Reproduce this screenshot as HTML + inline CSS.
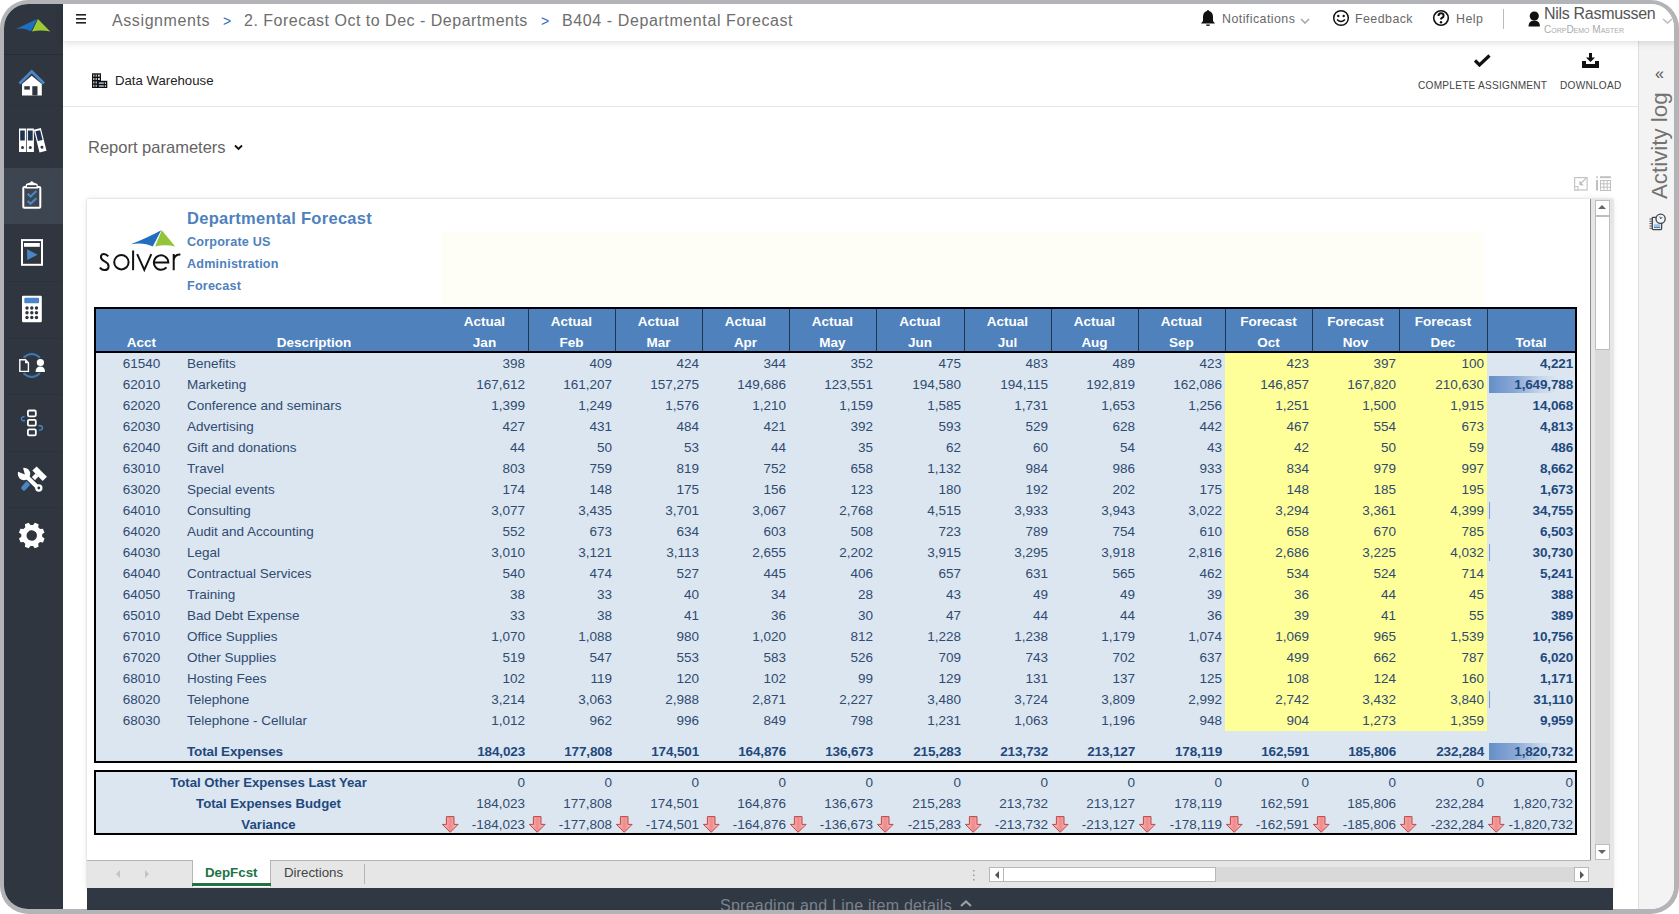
<!DOCTYPE html>
<html><head><meta charset="utf-8">
<style>
*{box-sizing:border-box;margin:0;padding:0}
html,body{width:1679px;height:914px;overflow:hidden;background:#fff;font-family:"Liberation Sans",sans-serif}
.abs{position:absolute}
.t{position:absolute;white-space:nowrap;line-height:1}
#frame{position:absolute;left:0;top:0;width:1679px;height:914px;border:4px solid #b3b4b8;border-right-width:5px;border-bottom-width:5px;border-radius:28px;overflow:hidden;background:#fff}
.hc{position:absolute;top:310px;height:42px;color:#fff;font-weight:bold;font-size:13.5px;line-height:21px;text-align:center;padding-top:1px}
.vl{position:absolute;top:309px;width:1px;height:42px;background:#1f3550}
.acct{position:absolute;left:96px;width:91px;text-align:center;font-size:13.5px;line-height:21px;color:#2f4b70}
.desc{position:absolute;left:187px;font-size:13.5px;line-height:21px;color:#2f4b70;white-space:nowrap}
.num{position:absolute;text-align:right;font-size:13.5px;line-height:21px;color:#2f4b70;white-space:nowrap}
.tot,.b{font-weight:bold;color:#1f497d;letter-spacing:-0.15px}
.lab2{position:absolute;left:96px;width:345px;text-align:center;font-size:13.2px;line-height:21px;font-weight:bold;color:#1f497d;white-space:nowrap}
.bar{position:absolute;height:17px;background:linear-gradient(to right,#6690c8 0%,#88a7d5 30%,#c5d5ea 60%,#dce6f1 80%)}
.arr{position:absolute}
</style></head><body>
<div id="frame">
  <!-- sidebar -->
  <div class="abs" style="left:0;top:0;width:59px;height:906px;background:#2f363f"></div>
  <div class="abs" style="left:0;top:164px;width:59px;height:56px;background:#3d4550"></div>
  <!-- top bar -->
  <div class="abs" style="left:59px;top:0;width:1616px;height:37px;background:#fff;box-shadow:0 2px 7px rgba(0,0,0,.13);z-index:2"></div>
  <!-- sub header -->
  <div class="abs" style="left:59px;top:102px;width:1575px;height:1px;background:#e6e6e6"></div>
  <!-- right panel -->
  <div class="abs" style="left:1634px;top:37px;width:37px;height:873px;background:#f3f3f3;border-left:1px solid #dedede"></div>
</div>

<!-- sidebar icons -->
<svg class="abs" style="left:0;top:0" width="63" height="914" viewBox="0 0 63 914">
  <!-- separators -->
  <g fill="#272d35">
    <rect x="4" y="54" width="59" height="1"/>
    <rect x="4" y="105" width="59" height="1" opacity="0.35"/>
    <rect x="4" y="281" width="59" height="1" opacity="0.4"/>
    <rect x="4" y="338" width="59" height="1" opacity="0.4"/>
    <rect x="4" y="394" width="59" height="1" opacity="0.4"/>
    <rect x="4" y="451" width="59" height="1" opacity="0.4"/>
    <rect x="4" y="507" width="59" height="1" opacity="0.4"/>
  </g>
  <!-- logo -->
  <path d="M15.9 29 Q30 22 37.4 18.9 L31 31.3 Q24 27.5 15.9 29 Z" fill="#1f6ec0"/>
  <path d="M38 18.9 L50.2 31.6 Q41 29.5 32 31.5 Z" fill="#9acb34"/>
  <!-- home -->
  <path d="M19.5 83.5 L31.7 71.5 L44 83.5" fill="none" stroke="#4a86c6" stroke-width="2.8" stroke-linejoin="miter"/>
  <path d="M22 84 L31.7 75.8 L41.8 84 V95.4 H22 Z" fill="#fff"/>
  <rect x="24.3" y="86.2" width="5.5" height="3.4" fill="#2f363f"/>
  <rect x="32.3" y="86.2" width="5.2" height="9.2" fill="#2f363f"/>
  <!-- binders -->
  <rect x="19" y="128.5" width="7" height="23.5" fill="#fff"/>
  <rect x="26.7" y="128.5" width="7.2" height="23.5" fill="#fff"/>
  <rect x="20.2" y="130.5" width="4.6" height="10" fill="#1e3352"/>
  <rect x="27.9" y="130.5" width="4.8" height="10" fill="#1e3352"/>
  <circle cx="22.5" cy="147.5" r="1.5" fill="#2f363f"/>
  <circle cx="30.3" cy="147.5" r="1.5" fill="#2f363f"/>
  <g transform="rotate(-14 40 140)">
    <rect x="36.5" y="128.5" width="7.2" height="23.5" fill="#fff"/>
    <rect x="37.7" y="130.5" width="4.8" height="10" fill="#1e3352"/>
    <circle cx="40.1" cy="147.5" r="1.5" fill="#2f363f"/>
  </g>
  <!-- clipboard -->
  <rect x="23.3" y="187" width="17" height="20.8" rx="1" fill="none" stroke="#fff" stroke-width="2"/>
  <path d="M25.2 188.5 L26 184 L30 182.5 L31.8 181 L33.6 182.5 L37.5 184 L38.3 188.5 Z" fill="#fff"/>
  <rect x="27" y="185.2" width="9.5" height="1.8" fill="#3d4550"/>
  <path d="M27.6 193.8 L30.6 196.6 L36.4 191" fill="none" stroke="#4a86c6" stroke-width="2.2"/>
  <path d="M27.6 201 L30.6 203.8 L36.4 198.2" fill="none" stroke="#4a86c6" stroke-width="2.2"/>
  <!-- play -->
  <rect x="22" y="240.1" width="20" height="24.7" fill="none" stroke="#fff" stroke-width="2"/>
  <rect x="24" y="243" width="15.8" height="3.8" fill="#fff"/>
  <path d="M27 249.3 L37.6 254.7 L27.3 260 Z" fill="#4a86c6"/>
  <!-- calculator -->
  <rect x="22" y="295.8" width="19.8" height="26.5" rx="1.2" fill="#fff"/>
  <rect x="24.3" y="297.8" width="14.8" height="5.4" rx="1" fill="#4a86c6"/>
  <g fill="#2f363f">
    <circle cx="27" cy="308" r="1.7"/><circle cx="31.8" cy="308" r="1.7"/><circle cx="36.5" cy="308" r="1.7"/>
    <circle cx="27" cy="312.8" r="1.7"/><circle cx="31.8" cy="312.8" r="1.7"/><circle cx="36.5" cy="312.8" r="1.7"/>
    <circle cx="27" cy="317.5" r="1.7"/><circle cx="31.8" cy="317.5" r="1.7"/><circle cx="36.5" cy="317.5" r="1.7"/>
  </g>
  <!-- doc + person -->
  <path d="M23.5 357.8 Q31.7 350.2 40 357.8" fill="none" stroke="#3f78b8" stroke-width="2"/>
  <path d="M23.5 373.2 Q31.7 380.8 40 373.2" fill="none" stroke="#3f78b8" stroke-width="2"/>
  <path d="M19.8 359.8 H25.5 L28.4 362.8 V371.4 H19.8 Z" fill="#2f363f" stroke="#fff" stroke-width="1.4"/>
  <path d="M25 360 V363.3 H28.3 Z" fill="#fff"/>
  <circle cx="40.4" cy="362.5" r="3.6" fill="#fff"/>
  <path d="M35.6 372 Q35.6 366.5 40.4 366.5 Q45 366.5 45 372 Z" fill="#fff"/>
  <!-- flow -->
  <g fill="none" stroke="#fff" stroke-width="1.8">
    <rect x="27.9" y="410.5" width="7.9" height="5.8" rx="1.2"/>
    <rect x="27.9" y="419.9" width="7.9" height="5.8" rx="1.2"/>
    <rect x="27.9" y="429.4" width="7.9" height="6" rx="1.2"/>
  </g>
  <path d="M24.5 416.5 Q21 417 21.5 419.5 Q22.5 421.5 25 420.5" fill="none" stroke="#4a86c6" stroke-width="1.4"/>
  <path d="M38.5 425.5 Q42.5 425.5 42.5 428 Q42 430.5 39 430" fill="none" stroke="#4a86c6" stroke-width="1.4"/>
  <!-- tools -->
  <path d="M30.5 480.5 L23.8 488" stroke="#4a86c6" stroke-width="5" stroke-linecap="round"/>
  <path d="M34.5 468.5 L44.8 478.8" stroke="#fff" stroke-width="6"/>
  <path d="M37 475 L31 481" stroke="#fff" stroke-width="4.4"/>
  <path d="M25.5 475.5 L38.5 488.2" stroke="#2f363f" stroke-width="6.6" stroke-linecap="round"/>
  <path d="M25.5 475.5 L38.5 488.2" stroke="#fff" stroke-width="4.2" stroke-linecap="round"/>
  <circle cx="38.8" cy="488" r="3.7" fill="#fff"/>
  <circle cx="38.8" cy="488" r="1.4" fill="#2f363f"/>
  <circle cx="24" cy="474" r="6.2" fill="#fff"/>
  <path d="M24.8 474.6 L17 471.2 L17 466 L22.5 465.5 Z" fill="#2f363f"/>
  <!-- gear -->
  <g transform="translate(31.7 535.6)">
    <path id="gear" fill="#fff" fill-rule="evenodd" d="M-2.2 -12.7 L2.2 -12.7 L3 -9.6 L5.6 -8.5 L8.3 -10.1 L11.4 -7 L9.8 -4.3 L10.9 -1.7 L14 -0.9 L14 3.5 L10.9 4.3 L9.8 6.9 L11.4 9.6 L8.3 12.7 L5.6 11.1 L3 12.2 L2.2 15.3 L-2.2 15.3 L-3 12.2 L-5.6 11.1 L-8.3 12.7 L-11.4 9.6 L-9.8 6.9 L-10.9 4.3 L-14 3.5 L-14 -0.9 L-10.9 -1.7 L-9.8 -4.3 L-11.4 -7 L-8.3 -10.1 L-5.6 -8.5 L-3 -9.6 Z M0 -4.3 A5.6 5.6 0 1 0 0.01 -4.3 Z" transform="rotate(22.5) translate(0 -1.3) scale(0.93)"/>
  </g>
</svg>

<!-- top bar content -->
<div style="position:absolute;left:0;top:0;z-index:3">
  <svg class="abs" style="left:76px;top:14px" width="11" height="10"><g fill="#222"><rect x="0" y="0" width="10" height="1.6"/><rect x="0" y="4" width="10" height="1.6"/><rect x="0" y="8" width="10" height="1.6"/></g></svg>
  <div class="t" style="left:112px;top:13px;font-size:16px;color:#6e6e6e;letter-spacing:0.6px">Assignments</div>
  <div class="t" style="left:223px;top:14px;font-size:14px;color:#2d6db5">&gt;</div>
  <div class="t" style="left:244px;top:13px;font-size:16px;color:#6e6e6e;letter-spacing:0.5px">2. Forecast Oct to Dec - Departments</div>
  <div class="t" style="left:541px;top:14px;font-size:14px;color:#2d6db5">&gt;</div>
  <div class="t" style="left:562px;top:13px;font-size:16px;color:#6e6e6e;letter-spacing:0.6px">B404 - Departmental Forecast</div>

  <svg class="abs" style="left:1200px;top:9px" width="16" height="18" viewBox="0 0 16 18"><path d="M8 1 Q9 1 9 2 Q13 3 13 8 V12 L15 14.5 H1 L3 12 V8 Q3 3 7 2 Q7 1 8 1 Z" fill="#111"/><path d="M6 15.5 H10 Q10 17 8 17 Q6 17 6 15.5Z" fill="#111"/></svg>
  <div class="t" style="left:1222px;top:13px;font-size:12.4px;color:#686868;letter-spacing:0.45px">Notifications</div>
  <svg class="abs" style="left:1300px;top:18px" width="10" height="7"><path d="M1 1 L5 5 L9 1" fill="none" stroke="#aaa" stroke-width="1.6"/></svg>
  <svg class="abs" style="left:1332px;top:9px" width="18" height="18" viewBox="0 0 18 18"><circle cx="9" cy="9" r="7.3" fill="none" stroke="#111" stroke-width="1.5"/><circle cx="6.3" cy="7" r="1.2" fill="#111"/><circle cx="11.7" cy="7" r="1.2" fill="#111"/><path d="M5 10.5 Q9 14.5 13 10.5" fill="none" stroke="#111" stroke-width="1.5"/></svg>
  <div class="t" style="left:1355px;top:13px;font-size:12.4px;color:#686868;letter-spacing:0.45px">Feedback</div>
  <svg class="abs" style="left:1432px;top:9px" width="18" height="18" viewBox="0 0 18 18"><circle cx="9" cy="9" r="7.3" fill="none" stroke="#111" stroke-width="1.6"/><path d="M6.5 7 Q6.5 4.3 9 4.3 Q11.6 4.3 11.6 6.7 Q11.6 8.2 9.8 9 Q9 9.4 9 10.6" fill="none" stroke="#111" stroke-width="2"/><circle cx="9" cy="13.2" r="1.2" fill="#111"/></svg>
  <div class="t" style="left:1456px;top:13px;font-size:12.4px;color:#686868;letter-spacing:0.45px">Help</div>
  <div class="abs" style="left:1503px;top:9px;width:1px;height:20px;background:#bbb"></div>
  <svg class="abs" style="left:1527px;top:10px" width="15" height="18" viewBox="0 0 15 18"><circle cx="7.3" cy="6" r="4.6" fill="#111"/><path d="M1.5 16.5 Q1.5 10.5 7.3 10.5 Q13 10.5 13 16.5 Z" fill="#111"/></svg>
  <div class="t" style="left:1544px;top:6px;font-size:16px;color:#555;letter-spacing:-0.3px">Nils Rasmussen</div>
  <div class="t" style="left:1544px;top:25px;font-size:10px;color:#aaa;font-variant:small-caps">CorpDemo Master</div>
  <svg class="abs" style="left:1662px;top:18px" width="11" height="7"><path d="M1 1 L5.5 5 L10 1" fill="none" stroke="#bbb" stroke-width="1.6"/></svg>
</div>

<!-- sub header content -->
<svg class="abs" style="left:92px;top:73px" width="16" height="16" viewBox="0 0 16 16">
  <rect x="0" y="0.3" width="9" height="14.7" fill="#111"/>
  <g fill="#d8d8d8"><rect x="1.2" y="1.6" width="1.2" height="2"/><rect x="3.6" y="1.6" width="1.2" height="2"/><rect x="6" y="1.6" width="1.8" height="2"/>
  <rect x="1.2" y="5" width="1.2" height="2"/><rect x="3.6" y="5" width="1.2" height="2"/><rect x="6" y="5" width="1.8" height="2"/>
  <rect x="1.2" y="8.4" width="1.2" height="2"/><rect x="3.6" y="8.4" width="1.2" height="2"/>
  <rect x="1.2" y="11.8" width="1.2" height="2"/><rect x="3.6" y="11.8" width="1.2" height="2"/></g>
  <rect x="5.5" y="7.8" width="9.8" height="7.2" fill="#111"/>
  <g fill="#9fb6d0"><rect x="6.8" y="9.3" width="5" height="1.6"/><rect x="6.8" y="12.2" width="5" height="1.6"/></g>
  <g fill="#ddd"><rect x="12.8" y="9.3" width="1.2" height="1.6"/><rect x="12.8" y="12.2" width="1.2" height="1.6"/></g>
</svg>
<div class="t" style="left:115px;top:74px;font-size:13.2px;color:#222">Data Warehouse</div>

<svg class="abs" style="left:1474px;top:54px" width="17" height="13" viewBox="0 0 17 13"><path d="M1 6.5 L5.5 11 L15.5 1.5" fill="none" stroke="#111" stroke-width="3.2"/></svg>
<div class="t" style="left:1418px;top:81px;font-size:10.1px;color:#444;letter-spacing:0.25px">COMPLETE ASSIGNMENT</div>
<svg class="abs" style="left:1582px;top:53px" width="17" height="16" viewBox="0 0 17 16"><path d="M7 0 H10 V4.5 H13 L8.5 9 L4 4.5 H7 Z" fill="#111"/><path d="M0 8 H4 V11 H13 V8 H17 V15 H0 Z" fill="#111"/></svg>
<div class="t" style="left:1560px;top:81px;font-size:10.1px;color:#444;letter-spacing:0.25px">DOWNLOAD</div>

<!-- right panel content -->
<div class="t" style="left:1655px;top:66px;font-size:16px;color:#555">&laquo;</div>
<div class="t" style="left:1649px;top:199px;font-size:22.3px;color:#737373;transform-origin:0 0;transform:rotate(-90deg);font-weight:normal">Activity log</div>
<svg class="abs" style="left:1644px;top:208px" width="28" height="28" viewBox="0 0 28 28">
  <rect x="8.3" y="9.3" width="9.3" height="12.3" rx="0.8" fill="#e6eef8" stroke="#444" stroke-width="1.3"/>
  <g stroke="#555" stroke-width="1"><path d="M5.5 11 H8 M5.5 13.3 H8 M5.5 15.6 H8 M5.5 18 H8 M5.5 20.3 H8"/></g>
  <rect x="10" y="16.3" width="6" height="3" fill="#9dc0e8"/>
  <rect x="10" y="19" width="6" height="0.9" fill="#4a6fa0"/>
  <circle cx="16.6" cy="10.7" r="4.6" fill="#eef6fc" stroke="#444" stroke-width="1.3"/>
  <path d="M15.8 8.5 L16.6 11 L18.3 9" fill="none" stroke="#556" stroke-width="1"/>
</svg>

<!-- report params -->
<div class="t" style="left:88px;top:139px;font-size:16.5px;color:#646464">Report parameters</div>
<svg class="abs" style="left:234px;top:144px" width="9" height="7"><path d="M1 1.5 L4.5 5 L8 1.5" fill="none" stroke="#111" stroke-width="1.8"/></svg>

<!-- sheet icons -->
<svg class="abs" style="left:1568px;top:170px" width="48" height="26" viewBox="0 0 48 26">
  <rect x="6.6" y="7.6" width="12.5" height="12.4" fill="none" stroke="#c4c4c4" stroke-width="1.2"/>
  <rect x="6.6" y="16.6" width="3.4" height="3.4" fill="#fff" stroke="#c4c4c4" stroke-width="1.1"/>
  <path d="M18.5 8.5 L13.5 13.5 L16 15.2 L11.5 15.2 L11.5 10.6 L13.2 12.3 L17.5 8 Z" fill="#b8b8b8"/>
  <rect x="28" y="10" width="2" height="10.6" fill="#c0c0c0"/>
  <rect x="32" y="6.2" width="10.8" height="2" fill="#c0c0c0"/>
  <rect x="28" y="6.2" width="2" height="2" fill="#d0d0d0"/>
  <g fill="none" stroke="#c0c0c0" stroke-width="1"><rect x="32.5" y="10.5" width="10" height="10"/><path d="M32.5 13.8 H42.5 M32.5 17.2 H42.5 M35.8 10.5 V20.5 M39.2 10.5 V20.5"/></g>
</svg>

<!-- spreadsheet container -->
<div class="abs" style="left:87px;top:199px;width:1526px;height:690px;background:#fff;box-shadow:0 0 2px rgba(0,0,0,.2),0 0 7px rgba(0,0,0,.08)"></div>
<div class="abs" style="left:1590px;top:199px;width:23px;height:662px;background:#e6e6e6;border-left:1px solid #8c8c8c"></div>
<div class="abs" style="left:1595px;top:200px;width:15px;height:16px;background:#fff;border:1px solid #bdbdbd"></div>
<svg class="abs" style="left:1597px;top:204px" width="10" height="6"><path d="M1 5 L5 1 L9 5Z" fill="#666"/></svg>
<div class="abs" style="left:1595px;top:216px;width:15px;height:134px;background:#fff;border:1px solid #bdbdbd"></div>
<div class="abs" style="left:1595px;top:350px;width:15px;height:494px;background:#dadada"></div>
<div class="abs" style="left:1595px;top:844px;width:15px;height:16px;background:#fff;border:1px solid #bdbdbd"></div>
<svg class="abs" style="left:1597px;top:849px" width="10" height="6"><path d="M1 1 L5 5 L9 1Z" fill="#666"/></svg>
<div class="abs" style="left:87px;top:860px;width:1504px;height:1px;background:#b5b5b5"></div>
<!-- tab bar -->
<div class="abs" style="left:87px;top:861px;width:1526px;height:27px;background:#e6e6e6"></div>
<svg class="abs" style="left:112px;top:868px" width="40" height="12"><path d="M8 2 L4 6 L8 10Z" fill="#c4c4c4"/><path d="M33 2 L37 6 L33 10Z" fill="#c4c4c4"/></svg>
<div class="abs" style="left:192px;top:860px;width:79px;height:27px;background:#fff;border-left:1px solid #b5b5b5;border-right:1px solid #b5b5b5"></div>
<div class="abs" style="left:192px;top:883px;width:79px;height:3px;background:#217346"></div>
<div class="t" style="left:205px;top:866px;font-size:13.3px;color:#217346;font-weight:bold">DepFcst</div>
<div class="t" style="left:284px;top:866px;font-size:13.3px;color:#444">Directions</div>
<div class="abs" style="left:364px;top:864px;width:1px;height:20px;background:#b5b5b5"></div>
<svg class="abs" style="left:972px;top:869px" width="4" height="13"><g fill="#999"><rect x="1" y="1" width="1.5" height="1.5"/><rect x="1" y="5.5" width="1.5" height="1.5"/><rect x="1" y="10" width="1.5" height="1.5"/></g></svg>
<div class="abs" style="left:1004px;top:867px;width:570px;height:15px;background:#d9d9d9"></div>
<div class="abs" style="left:989px;top:867px;width:15px;height:15px;background:#fff;border:1px solid #b8b8b8"></div>
<svg class="abs" style="left:993px;top:870px" width="8" height="10"><path d="M6 1 L2 5 L6 9Z" fill="#555"/></svg>
<div class="abs" style="left:1003px;top:867px;width:213px;height:15px;background:#fff;border:1px solid #b8b8b8"></div>
<div class="abs" style="left:1574px;top:867px;width:15px;height:15px;background:#fff;border:1px solid #b8b8b8"></div>
<svg class="abs" style="left:1578px;top:870px" width="8" height="10"><path d="M2 1 L6 5 L2 9Z" fill="#555"/></svg>
<!-- bottom dark bar -->
<div class="abs" style="left:87px;top:888px;width:1526px;height:22px;background:#2f3843;overflow:hidden">
  <div class="t" style="left:633px;top:10px;font-size:16px;color:#7b828b;letter-spacing:0.25px">Spreading and Line item details</div>
  <svg class="abs" style="left:872px;top:11px" width="14" height="9"><path d="M2 7 L7 2.5 L12 7" fill="none" stroke="#9aa0a7" stroke-width="2.2"/></svg>
</div>
<!-- shadow right of container -->

<!-- report header -->
<div class="abs" style="left:441px;top:232px;width:1043px;height:73px;background:#fefef7"></div>
<svg class="abs" style="left:98px;top:226px" width="85" height="50" viewBox="98 226 85 50">
  <path d="M130.8 244.3 Q150 236.5 161.2 230.2 L152.7 246.6 Q143.5 241.8 130.8 244.3 Z" fill="#1f6ec0"/>
  <path d="M161.8 230.2 L175.2 246.6 Q165 243.8 155.1 246.6 Z" fill="#93c43a"/>
</svg>
<svg class="abs" style="left:96px;top:244px" width="90" height="32" viewBox="96 244 90 32"><g fill="none" stroke="#111" stroke-width="2">
<path d="M108.2 256.3 Q106.2 254 103.6 254.1 Q100.9 254.3 100.9 257.2 Q101.1 259.8 104.6 261.4 Q108.7 263.4 108.6 266.4 Q108.4 270.1 104.4 270.1 Q101.4 270.1 100 267.6"/>
<circle cx="121.4" cy="262.2" r="7.2"/>
<path d="M133.1 250.5 V270.2"/>
<path d="M137.2 254.2 L144.3 269.8 L151.3 254.2"/>
<path d="M153.9 262.4 H168.3 A7.2 7.2 0 1 0 166.5 267.3"/>
<path d="M173.7 254 V270.2 M173.7 260 Q174.6 254.4 180.4 254.6"/>
</g></svg>
<div class="t" style="left:187px;top:210px;font-size:16.5px;color:#4f81bd;font-weight:bold;letter-spacing:0.3px">Departmental Forecast</div>
<div class="t" style="left:187px;top:236px;font-size:12.6px;color:#4f81bd;font-weight:bold;letter-spacing:0.2px">Corporate US</div>
<div class="t" style="left:187px;top:258px;font-size:12.6px;color:#4f81bd;font-weight:bold;letter-spacing:0.2px">Administration</div>
<div class="t" style="left:187px;top:280px;font-size:12.6px;color:#4f81bd;font-weight:bold;letter-spacing:0.2px">Forecast</div>

<!-- table -->
<div class="abs" style="left:94px;top:307px;width:1483px;height:456px;border:2px solid #000;background:#dce6f1"></div>
<div class="abs" style="left:96px;top:309px;width:1479px;height:42px;background:#4f81bd"></div>
<div class="abs" style="left:96px;top:351px;width:1479px;height:2px;background:#000"></div>
<div class="abs" style="left:1225px;top:353px;width:262px;height:378px;background:#ffff99"></div>
<div class="abs" style="left:94px;top:770px;width:1483px;height:65px;border:2px solid #000;background:#dce6f1"></div>
<div class="hc" style="left:441px;width:87px">Actual<br>Jan</div>
<div class="hc" style="left:528px;width:87px">Actual<br>Feb</div>
<div class="hc" style="left:615px;width:87px">Actual<br>Mar</div>
<div class="hc" style="left:702px;width:87px">Actual<br>Apr</div>
<div class="hc" style="left:789px;width:87px">Actual<br>May</div>
<div class="hc" style="left:876px;width:88px">Actual<br>Jun</div>
<div class="hc" style="left:964px;width:87px">Actual<br>Jul</div>
<div class="hc" style="left:1051px;width:87px">Actual<br>Aug</div>
<div class="hc" style="left:1138px;width:87px">Actual<br>Sep</div>
<div class="hc" style="left:1225px;width:87px">Forecast<br>Oct</div>
<div class="hc" style="left:1312px;width:87px">Forecast<br>Nov</div>
<div class="hc" style="left:1399px;width:88px">Forecast<br>Dec</div>
<div class="hc" style="left:1487px;width:88px"><br>Total</div>
<div class="hc" style="left:96px;width:91px"><br>Acct</div>
<div class="hc" style="left:187px;width:254px"><br>Description</div>
<div class="vl" style="left:528px"></div>
<div class="vl" style="left:615px"></div>
<div class="vl" style="left:702px"></div>
<div class="vl" style="left:789px"></div>
<div class="vl" style="left:876px"></div>
<div class="vl" style="left:964px"></div>
<div class="vl" style="left:1051px"></div>
<div class="vl" style="left:1138px"></div>
<div class="vl" style="left:1225px"></div>
<div class="vl" style="left:1312px"></div>
<div class="vl" style="left:1399px"></div>
<div class="vl" style="left:1487px"></div>
<div class="bar" style="top:376px;left:1489px;width:85px"></div>
<div class="bar" style="top:502px;left:1489px;width:2px"></div>
<div class="bar" style="top:544px;left:1489px;width:2px"></div>
<div class="bar" style="top:691px;left:1489px;width:2px"></div>
<div class="bar" style="top:743px;left:1489px;width:85px"></div>
<div class="acct" style="top:353px">61540</div>
<div class="desc" style="top:353px">Benefits</div>
<div class="num" style="top:353px;left:441px;width:84px">398</div>
<div class="num" style="top:353px;left:528px;width:84px">409</div>
<div class="num" style="top:353px;left:615px;width:84px">424</div>
<div class="num" style="top:353px;left:702px;width:84px">344</div>
<div class="num" style="top:353px;left:789px;width:84px">352</div>
<div class="num" style="top:353px;left:876px;width:85px">475</div>
<div class="num" style="top:353px;left:964px;width:84px">483</div>
<div class="num" style="top:353px;left:1051px;width:84px">489</div>
<div class="num" style="top:353px;left:1138px;width:84px">423</div>
<div class="num" style="top:353px;left:1225px;width:84px">423</div>
<div class="num" style="top:353px;left:1312px;width:84px">397</div>
<div class="num" style="top:353px;left:1399px;width:85px">100</div>
<div class="num tot" style="top:353px;left:1487px;width:86px">4,221</div>
<div class="acct" style="top:374px">62010</div>
<div class="desc" style="top:374px">Marketing</div>
<div class="num" style="top:374px;left:441px;width:84px">167,612</div>
<div class="num" style="top:374px;left:528px;width:84px">161,207</div>
<div class="num" style="top:374px;left:615px;width:84px">157,275</div>
<div class="num" style="top:374px;left:702px;width:84px">149,686</div>
<div class="num" style="top:374px;left:789px;width:84px">123,551</div>
<div class="num" style="top:374px;left:876px;width:85px">194,580</div>
<div class="num" style="top:374px;left:964px;width:84px">194,115</div>
<div class="num" style="top:374px;left:1051px;width:84px">192,819</div>
<div class="num" style="top:374px;left:1138px;width:84px">162,086</div>
<div class="num" style="top:374px;left:1225px;width:84px">146,857</div>
<div class="num" style="top:374px;left:1312px;width:84px">167,820</div>
<div class="num" style="top:374px;left:1399px;width:85px">210,630</div>
<div class="num tot" style="top:374px;left:1487px;width:86px">1,649,788</div>
<div class="acct" style="top:395px">62020</div>
<div class="desc" style="top:395px">Conference and seminars</div>
<div class="num" style="top:395px;left:441px;width:84px">1,399</div>
<div class="num" style="top:395px;left:528px;width:84px">1,249</div>
<div class="num" style="top:395px;left:615px;width:84px">1,576</div>
<div class="num" style="top:395px;left:702px;width:84px">1,210</div>
<div class="num" style="top:395px;left:789px;width:84px">1,159</div>
<div class="num" style="top:395px;left:876px;width:85px">1,585</div>
<div class="num" style="top:395px;left:964px;width:84px">1,731</div>
<div class="num" style="top:395px;left:1051px;width:84px">1,653</div>
<div class="num" style="top:395px;left:1138px;width:84px">1,256</div>
<div class="num" style="top:395px;left:1225px;width:84px">1,251</div>
<div class="num" style="top:395px;left:1312px;width:84px">1,500</div>
<div class="num" style="top:395px;left:1399px;width:85px">1,915</div>
<div class="num tot" style="top:395px;left:1487px;width:86px">14,068</div>
<div class="acct" style="top:416px">62030</div>
<div class="desc" style="top:416px">Advertising</div>
<div class="num" style="top:416px;left:441px;width:84px">427</div>
<div class="num" style="top:416px;left:528px;width:84px">431</div>
<div class="num" style="top:416px;left:615px;width:84px">484</div>
<div class="num" style="top:416px;left:702px;width:84px">421</div>
<div class="num" style="top:416px;left:789px;width:84px">392</div>
<div class="num" style="top:416px;left:876px;width:85px">593</div>
<div class="num" style="top:416px;left:964px;width:84px">529</div>
<div class="num" style="top:416px;left:1051px;width:84px">628</div>
<div class="num" style="top:416px;left:1138px;width:84px">442</div>
<div class="num" style="top:416px;left:1225px;width:84px">467</div>
<div class="num" style="top:416px;left:1312px;width:84px">554</div>
<div class="num" style="top:416px;left:1399px;width:85px">673</div>
<div class="num tot" style="top:416px;left:1487px;width:86px">4,813</div>
<div class="acct" style="top:437px">62040</div>
<div class="desc" style="top:437px">Gift and donations</div>
<div class="num" style="top:437px;left:441px;width:84px">44</div>
<div class="num" style="top:437px;left:528px;width:84px">50</div>
<div class="num" style="top:437px;left:615px;width:84px">53</div>
<div class="num" style="top:437px;left:702px;width:84px">44</div>
<div class="num" style="top:437px;left:789px;width:84px">35</div>
<div class="num" style="top:437px;left:876px;width:85px">62</div>
<div class="num" style="top:437px;left:964px;width:84px">60</div>
<div class="num" style="top:437px;left:1051px;width:84px">54</div>
<div class="num" style="top:437px;left:1138px;width:84px">43</div>
<div class="num" style="top:437px;left:1225px;width:84px">42</div>
<div class="num" style="top:437px;left:1312px;width:84px">50</div>
<div class="num" style="top:437px;left:1399px;width:85px">59</div>
<div class="num tot" style="top:437px;left:1487px;width:86px">486</div>
<div class="acct" style="top:458px">63010</div>
<div class="desc" style="top:458px">Travel</div>
<div class="num" style="top:458px;left:441px;width:84px">803</div>
<div class="num" style="top:458px;left:528px;width:84px">759</div>
<div class="num" style="top:458px;left:615px;width:84px">819</div>
<div class="num" style="top:458px;left:702px;width:84px">752</div>
<div class="num" style="top:458px;left:789px;width:84px">658</div>
<div class="num" style="top:458px;left:876px;width:85px">1,132</div>
<div class="num" style="top:458px;left:964px;width:84px">984</div>
<div class="num" style="top:458px;left:1051px;width:84px">986</div>
<div class="num" style="top:458px;left:1138px;width:84px">933</div>
<div class="num" style="top:458px;left:1225px;width:84px">834</div>
<div class="num" style="top:458px;left:1312px;width:84px">979</div>
<div class="num" style="top:458px;left:1399px;width:85px">997</div>
<div class="num tot" style="top:458px;left:1487px;width:86px">8,662</div>
<div class="acct" style="top:479px">63020</div>
<div class="desc" style="top:479px">Special events</div>
<div class="num" style="top:479px;left:441px;width:84px">174</div>
<div class="num" style="top:479px;left:528px;width:84px">148</div>
<div class="num" style="top:479px;left:615px;width:84px">175</div>
<div class="num" style="top:479px;left:702px;width:84px">156</div>
<div class="num" style="top:479px;left:789px;width:84px">123</div>
<div class="num" style="top:479px;left:876px;width:85px">180</div>
<div class="num" style="top:479px;left:964px;width:84px">192</div>
<div class="num" style="top:479px;left:1051px;width:84px">202</div>
<div class="num" style="top:479px;left:1138px;width:84px">175</div>
<div class="num" style="top:479px;left:1225px;width:84px">148</div>
<div class="num" style="top:479px;left:1312px;width:84px">185</div>
<div class="num" style="top:479px;left:1399px;width:85px">195</div>
<div class="num tot" style="top:479px;left:1487px;width:86px">1,673</div>
<div class="acct" style="top:500px">64010</div>
<div class="desc" style="top:500px">Consulting</div>
<div class="num" style="top:500px;left:441px;width:84px">3,077</div>
<div class="num" style="top:500px;left:528px;width:84px">3,435</div>
<div class="num" style="top:500px;left:615px;width:84px">3,701</div>
<div class="num" style="top:500px;left:702px;width:84px">3,067</div>
<div class="num" style="top:500px;left:789px;width:84px">2,768</div>
<div class="num" style="top:500px;left:876px;width:85px">4,515</div>
<div class="num" style="top:500px;left:964px;width:84px">3,933</div>
<div class="num" style="top:500px;left:1051px;width:84px">3,943</div>
<div class="num" style="top:500px;left:1138px;width:84px">3,022</div>
<div class="num" style="top:500px;left:1225px;width:84px">3,294</div>
<div class="num" style="top:500px;left:1312px;width:84px">3,361</div>
<div class="num" style="top:500px;left:1399px;width:85px">4,399</div>
<div class="num tot" style="top:500px;left:1487px;width:86px">34,755</div>
<div class="acct" style="top:521px">64020</div>
<div class="desc" style="top:521px">Audit and Accounting</div>
<div class="num" style="top:521px;left:441px;width:84px">552</div>
<div class="num" style="top:521px;left:528px;width:84px">673</div>
<div class="num" style="top:521px;left:615px;width:84px">634</div>
<div class="num" style="top:521px;left:702px;width:84px">603</div>
<div class="num" style="top:521px;left:789px;width:84px">508</div>
<div class="num" style="top:521px;left:876px;width:85px">723</div>
<div class="num" style="top:521px;left:964px;width:84px">789</div>
<div class="num" style="top:521px;left:1051px;width:84px">754</div>
<div class="num" style="top:521px;left:1138px;width:84px">610</div>
<div class="num" style="top:521px;left:1225px;width:84px">658</div>
<div class="num" style="top:521px;left:1312px;width:84px">670</div>
<div class="num" style="top:521px;left:1399px;width:85px">785</div>
<div class="num tot" style="top:521px;left:1487px;width:86px">6,503</div>
<div class="acct" style="top:542px">64030</div>
<div class="desc" style="top:542px">Legal</div>
<div class="num" style="top:542px;left:441px;width:84px">3,010</div>
<div class="num" style="top:542px;left:528px;width:84px">3,121</div>
<div class="num" style="top:542px;left:615px;width:84px">3,113</div>
<div class="num" style="top:542px;left:702px;width:84px">2,655</div>
<div class="num" style="top:542px;left:789px;width:84px">2,202</div>
<div class="num" style="top:542px;left:876px;width:85px">3,915</div>
<div class="num" style="top:542px;left:964px;width:84px">3,295</div>
<div class="num" style="top:542px;left:1051px;width:84px">3,918</div>
<div class="num" style="top:542px;left:1138px;width:84px">2,816</div>
<div class="num" style="top:542px;left:1225px;width:84px">2,686</div>
<div class="num" style="top:542px;left:1312px;width:84px">3,225</div>
<div class="num" style="top:542px;left:1399px;width:85px">4,032</div>
<div class="num tot" style="top:542px;left:1487px;width:86px">30,730</div>
<div class="acct" style="top:563px">64040</div>
<div class="desc" style="top:563px">Contractual Services</div>
<div class="num" style="top:563px;left:441px;width:84px">540</div>
<div class="num" style="top:563px;left:528px;width:84px">474</div>
<div class="num" style="top:563px;left:615px;width:84px">527</div>
<div class="num" style="top:563px;left:702px;width:84px">445</div>
<div class="num" style="top:563px;left:789px;width:84px">406</div>
<div class="num" style="top:563px;left:876px;width:85px">657</div>
<div class="num" style="top:563px;left:964px;width:84px">631</div>
<div class="num" style="top:563px;left:1051px;width:84px">565</div>
<div class="num" style="top:563px;left:1138px;width:84px">462</div>
<div class="num" style="top:563px;left:1225px;width:84px">534</div>
<div class="num" style="top:563px;left:1312px;width:84px">524</div>
<div class="num" style="top:563px;left:1399px;width:85px">714</div>
<div class="num tot" style="top:563px;left:1487px;width:86px">5,241</div>
<div class="acct" style="top:584px">64050</div>
<div class="desc" style="top:584px">Training</div>
<div class="num" style="top:584px;left:441px;width:84px">38</div>
<div class="num" style="top:584px;left:528px;width:84px">33</div>
<div class="num" style="top:584px;left:615px;width:84px">40</div>
<div class="num" style="top:584px;left:702px;width:84px">34</div>
<div class="num" style="top:584px;left:789px;width:84px">28</div>
<div class="num" style="top:584px;left:876px;width:85px">43</div>
<div class="num" style="top:584px;left:964px;width:84px">49</div>
<div class="num" style="top:584px;left:1051px;width:84px">49</div>
<div class="num" style="top:584px;left:1138px;width:84px">39</div>
<div class="num" style="top:584px;left:1225px;width:84px">36</div>
<div class="num" style="top:584px;left:1312px;width:84px">44</div>
<div class="num" style="top:584px;left:1399px;width:85px">45</div>
<div class="num tot" style="top:584px;left:1487px;width:86px">388</div>
<div class="acct" style="top:605px">65010</div>
<div class="desc" style="top:605px">Bad Debt Expense</div>
<div class="num" style="top:605px;left:441px;width:84px">33</div>
<div class="num" style="top:605px;left:528px;width:84px">38</div>
<div class="num" style="top:605px;left:615px;width:84px">41</div>
<div class="num" style="top:605px;left:702px;width:84px">36</div>
<div class="num" style="top:605px;left:789px;width:84px">30</div>
<div class="num" style="top:605px;left:876px;width:85px">47</div>
<div class="num" style="top:605px;left:964px;width:84px">44</div>
<div class="num" style="top:605px;left:1051px;width:84px">44</div>
<div class="num" style="top:605px;left:1138px;width:84px">36</div>
<div class="num" style="top:605px;left:1225px;width:84px">39</div>
<div class="num" style="top:605px;left:1312px;width:84px">41</div>
<div class="num" style="top:605px;left:1399px;width:85px">55</div>
<div class="num tot" style="top:605px;left:1487px;width:86px">389</div>
<div class="acct" style="top:626px">67010</div>
<div class="desc" style="top:626px">Office Supplies</div>
<div class="num" style="top:626px;left:441px;width:84px">1,070</div>
<div class="num" style="top:626px;left:528px;width:84px">1,088</div>
<div class="num" style="top:626px;left:615px;width:84px">980</div>
<div class="num" style="top:626px;left:702px;width:84px">1,020</div>
<div class="num" style="top:626px;left:789px;width:84px">812</div>
<div class="num" style="top:626px;left:876px;width:85px">1,228</div>
<div class="num" style="top:626px;left:964px;width:84px">1,238</div>
<div class="num" style="top:626px;left:1051px;width:84px">1,179</div>
<div class="num" style="top:626px;left:1138px;width:84px">1,074</div>
<div class="num" style="top:626px;left:1225px;width:84px">1,069</div>
<div class="num" style="top:626px;left:1312px;width:84px">965</div>
<div class="num" style="top:626px;left:1399px;width:85px">1,539</div>
<div class="num tot" style="top:626px;left:1487px;width:86px">10,756</div>
<div class="acct" style="top:647px">67020</div>
<div class="desc" style="top:647px">Other Supplies</div>
<div class="num" style="top:647px;left:441px;width:84px">519</div>
<div class="num" style="top:647px;left:528px;width:84px">547</div>
<div class="num" style="top:647px;left:615px;width:84px">553</div>
<div class="num" style="top:647px;left:702px;width:84px">583</div>
<div class="num" style="top:647px;left:789px;width:84px">526</div>
<div class="num" style="top:647px;left:876px;width:85px">709</div>
<div class="num" style="top:647px;left:964px;width:84px">743</div>
<div class="num" style="top:647px;left:1051px;width:84px">702</div>
<div class="num" style="top:647px;left:1138px;width:84px">637</div>
<div class="num" style="top:647px;left:1225px;width:84px">499</div>
<div class="num" style="top:647px;left:1312px;width:84px">662</div>
<div class="num" style="top:647px;left:1399px;width:85px">787</div>
<div class="num tot" style="top:647px;left:1487px;width:86px">6,020</div>
<div class="acct" style="top:668px">68010</div>
<div class="desc" style="top:668px">Hosting Fees</div>
<div class="num" style="top:668px;left:441px;width:84px">102</div>
<div class="num" style="top:668px;left:528px;width:84px">119</div>
<div class="num" style="top:668px;left:615px;width:84px">120</div>
<div class="num" style="top:668px;left:702px;width:84px">102</div>
<div class="num" style="top:668px;left:789px;width:84px">99</div>
<div class="num" style="top:668px;left:876px;width:85px">129</div>
<div class="num" style="top:668px;left:964px;width:84px">131</div>
<div class="num" style="top:668px;left:1051px;width:84px">137</div>
<div class="num" style="top:668px;left:1138px;width:84px">125</div>
<div class="num" style="top:668px;left:1225px;width:84px">108</div>
<div class="num" style="top:668px;left:1312px;width:84px">124</div>
<div class="num" style="top:668px;left:1399px;width:85px">160</div>
<div class="num tot" style="top:668px;left:1487px;width:86px">1,171</div>
<div class="acct" style="top:689px">68020</div>
<div class="desc" style="top:689px">Telephone</div>
<div class="num" style="top:689px;left:441px;width:84px">3,214</div>
<div class="num" style="top:689px;left:528px;width:84px">3,063</div>
<div class="num" style="top:689px;left:615px;width:84px">2,988</div>
<div class="num" style="top:689px;left:702px;width:84px">2,871</div>
<div class="num" style="top:689px;left:789px;width:84px">2,227</div>
<div class="num" style="top:689px;left:876px;width:85px">3,480</div>
<div class="num" style="top:689px;left:964px;width:84px">3,724</div>
<div class="num" style="top:689px;left:1051px;width:84px">3,809</div>
<div class="num" style="top:689px;left:1138px;width:84px">2,992</div>
<div class="num" style="top:689px;left:1225px;width:84px">2,742</div>
<div class="num" style="top:689px;left:1312px;width:84px">3,432</div>
<div class="num" style="top:689px;left:1399px;width:85px">3,840</div>
<div class="num tot" style="top:689px;left:1487px;width:86px">31,110</div>
<div class="acct" style="top:710px">68030</div>
<div class="desc" style="top:710px">Telephone - Cellular</div>
<div class="num" style="top:710px;left:441px;width:84px">1,012</div>
<div class="num" style="top:710px;left:528px;width:84px">962</div>
<div class="num" style="top:710px;left:615px;width:84px">996</div>
<div class="num" style="top:710px;left:702px;width:84px">849</div>
<div class="num" style="top:710px;left:789px;width:84px">798</div>
<div class="num" style="top:710px;left:876px;width:85px">1,231</div>
<div class="num" style="top:710px;left:964px;width:84px">1,063</div>
<div class="num" style="top:710px;left:1051px;width:84px">1,196</div>
<div class="num" style="top:710px;left:1138px;width:84px">948</div>
<div class="num" style="top:710px;left:1225px;width:84px">904</div>
<div class="num" style="top:710px;left:1312px;width:84px">1,273</div>
<div class="num" style="top:710px;left:1399px;width:85px">1,359</div>
<div class="num tot" style="top:710px;left:1487px;width:86px">9,959</div>
<div class="desc b" style="top:741px">Total Expenses</div>
<div class="num b" style="top:741px;left:441px;width:84px">184,023</div>
<div class="num b" style="top:741px;left:528px;width:84px">177,808</div>
<div class="num b" style="top:741px;left:615px;width:84px">174,501</div>
<div class="num b" style="top:741px;left:702px;width:84px">164,876</div>
<div class="num b" style="top:741px;left:789px;width:84px">136,673</div>
<div class="num b" style="top:741px;left:876px;width:85px">215,283</div>
<div class="num b" style="top:741px;left:964px;width:84px">213,732</div>
<div class="num b" style="top:741px;left:1051px;width:84px">213,127</div>
<div class="num b" style="top:741px;left:1138px;width:84px">178,119</div>
<div class="num b" style="top:741px;left:1225px;width:84px">162,591</div>
<div class="num b" style="top:741px;left:1312px;width:84px">185,806</div>
<div class="num b" style="top:741px;left:1399px;width:85px">232,284</div>
<div class="num b" style="top:741px;left:1487px;width:86px">1,820,732</div>
<div class="lab2" style="top:772px">Total Other Expenses Last Year</div>
<div class="num" style="top:772px;left:441px;width:84px">0</div>
<div class="num" style="top:772px;left:528px;width:84px">0</div>
<div class="num" style="top:772px;left:615px;width:84px">0</div>
<div class="num" style="top:772px;left:702px;width:84px">0</div>
<div class="num" style="top:772px;left:789px;width:84px">0</div>
<div class="num" style="top:772px;left:876px;width:85px">0</div>
<div class="num" style="top:772px;left:964px;width:84px">0</div>
<div class="num" style="top:772px;left:1051px;width:84px">0</div>
<div class="num" style="top:772px;left:1138px;width:84px">0</div>
<div class="num" style="top:772px;left:1225px;width:84px">0</div>
<div class="num" style="top:772px;left:1312px;width:84px">0</div>
<div class="num" style="top:772px;left:1399px;width:85px">0</div>
<div class="num" style="top:772px;left:1487px;width:86px">0</div>
<div class="lab2" style="top:793px">Total Expenses Budget</div>
<div class="num" style="top:793px;left:441px;width:84px">184,023</div>
<div class="num" style="top:793px;left:528px;width:84px">177,808</div>
<div class="num" style="top:793px;left:615px;width:84px">174,501</div>
<div class="num" style="top:793px;left:702px;width:84px">164,876</div>
<div class="num" style="top:793px;left:789px;width:84px">136,673</div>
<div class="num" style="top:793px;left:876px;width:85px">215,283</div>
<div class="num" style="top:793px;left:964px;width:84px">213,732</div>
<div class="num" style="top:793px;left:1051px;width:84px">213,127</div>
<div class="num" style="top:793px;left:1138px;width:84px">178,119</div>
<div class="num" style="top:793px;left:1225px;width:84px">162,591</div>
<div class="num" style="top:793px;left:1312px;width:84px">185,806</div>
<div class="num" style="top:793px;left:1399px;width:85px">232,284</div>
<div class="num" style="top:793px;left:1487px;width:86px">1,820,732</div>
<div class="lab2" style="top:814px">Variance</div>
<div class="num" style="top:814px;left:441px;width:84px">-184,023</div>
<svg class="arr" style="top:816px;left:442px" width="17" height="17" viewBox="0 0 17 17"><defs><linearGradient id="g0" x1="0" y1="0" x2="1" y2="0"><stop offset="0" stop-color="#fac4c4"/><stop offset="0.5" stop-color="#f08a8a"/><stop offset="1" stop-color="#fac4c4"/></linearGradient></defs><path d="M4.4 0.6 H12 V8.4 H16.1 L8.2 16.3 L0.4 8.4 H4.4 Z" fill="url(#g0)" stroke="#b94848" stroke-width="1"/></svg>
<div class="num" style="top:814px;left:528px;width:84px">-177,808</div>
<svg class="arr" style="top:816px;left:529px" width="17" height="17" viewBox="0 0 17 17"><defs><linearGradient id="g1" x1="0" y1="0" x2="1" y2="0"><stop offset="0" stop-color="#fac4c4"/><stop offset="0.5" stop-color="#f08a8a"/><stop offset="1" stop-color="#fac4c4"/></linearGradient></defs><path d="M4.4 0.6 H12 V8.4 H16.1 L8.2 16.3 L0.4 8.4 H4.4 Z" fill="url(#g1)" stroke="#b94848" stroke-width="1"/></svg>
<div class="num" style="top:814px;left:615px;width:84px">-174,501</div>
<svg class="arr" style="top:816px;left:616px" width="17" height="17" viewBox="0 0 17 17"><defs><linearGradient id="g2" x1="0" y1="0" x2="1" y2="0"><stop offset="0" stop-color="#fac4c4"/><stop offset="0.5" stop-color="#f08a8a"/><stop offset="1" stop-color="#fac4c4"/></linearGradient></defs><path d="M4.4 0.6 H12 V8.4 H16.1 L8.2 16.3 L0.4 8.4 H4.4 Z" fill="url(#g2)" stroke="#b94848" stroke-width="1"/></svg>
<div class="num" style="top:814px;left:702px;width:84px">-164,876</div>
<svg class="arr" style="top:816px;left:703px" width="17" height="17" viewBox="0 0 17 17"><defs><linearGradient id="g3" x1="0" y1="0" x2="1" y2="0"><stop offset="0" stop-color="#fac4c4"/><stop offset="0.5" stop-color="#f08a8a"/><stop offset="1" stop-color="#fac4c4"/></linearGradient></defs><path d="M4.4 0.6 H12 V8.4 H16.1 L8.2 16.3 L0.4 8.4 H4.4 Z" fill="url(#g3)" stroke="#b94848" stroke-width="1"/></svg>
<div class="num" style="top:814px;left:789px;width:84px">-136,673</div>
<svg class="arr" style="top:816px;left:790px" width="17" height="17" viewBox="0 0 17 17"><defs><linearGradient id="g4" x1="0" y1="0" x2="1" y2="0"><stop offset="0" stop-color="#fac4c4"/><stop offset="0.5" stop-color="#f08a8a"/><stop offset="1" stop-color="#fac4c4"/></linearGradient></defs><path d="M4.4 0.6 H12 V8.4 H16.1 L8.2 16.3 L0.4 8.4 H4.4 Z" fill="url(#g4)" stroke="#b94848" stroke-width="1"/></svg>
<div class="num" style="top:814px;left:876px;width:85px">-215,283</div>
<svg class="arr" style="top:816px;left:877px" width="17" height="17" viewBox="0 0 17 17"><defs><linearGradient id="g5" x1="0" y1="0" x2="1" y2="0"><stop offset="0" stop-color="#fac4c4"/><stop offset="0.5" stop-color="#f08a8a"/><stop offset="1" stop-color="#fac4c4"/></linearGradient></defs><path d="M4.4 0.6 H12 V8.4 H16.1 L8.2 16.3 L0.4 8.4 H4.4 Z" fill="url(#g5)" stroke="#b94848" stroke-width="1"/></svg>
<div class="num" style="top:814px;left:964px;width:84px">-213,732</div>
<svg class="arr" style="top:816px;left:965px" width="17" height="17" viewBox="0 0 17 17"><defs><linearGradient id="g6" x1="0" y1="0" x2="1" y2="0"><stop offset="0" stop-color="#fac4c4"/><stop offset="0.5" stop-color="#f08a8a"/><stop offset="1" stop-color="#fac4c4"/></linearGradient></defs><path d="M4.4 0.6 H12 V8.4 H16.1 L8.2 16.3 L0.4 8.4 H4.4 Z" fill="url(#g6)" stroke="#b94848" stroke-width="1"/></svg>
<div class="num" style="top:814px;left:1051px;width:84px">-213,127</div>
<svg class="arr" style="top:816px;left:1052px" width="17" height="17" viewBox="0 0 17 17"><defs><linearGradient id="g7" x1="0" y1="0" x2="1" y2="0"><stop offset="0" stop-color="#fac4c4"/><stop offset="0.5" stop-color="#f08a8a"/><stop offset="1" stop-color="#fac4c4"/></linearGradient></defs><path d="M4.4 0.6 H12 V8.4 H16.1 L8.2 16.3 L0.4 8.4 H4.4 Z" fill="url(#g7)" stroke="#b94848" stroke-width="1"/></svg>
<div class="num" style="top:814px;left:1138px;width:84px">-178,119</div>
<svg class="arr" style="top:816px;left:1139px" width="17" height="17" viewBox="0 0 17 17"><defs><linearGradient id="g8" x1="0" y1="0" x2="1" y2="0"><stop offset="0" stop-color="#fac4c4"/><stop offset="0.5" stop-color="#f08a8a"/><stop offset="1" stop-color="#fac4c4"/></linearGradient></defs><path d="M4.4 0.6 H12 V8.4 H16.1 L8.2 16.3 L0.4 8.4 H4.4 Z" fill="url(#g8)" stroke="#b94848" stroke-width="1"/></svg>
<div class="num" style="top:814px;left:1225px;width:84px">-162,591</div>
<svg class="arr" style="top:816px;left:1226px" width="17" height="17" viewBox="0 0 17 17"><defs><linearGradient id="g9" x1="0" y1="0" x2="1" y2="0"><stop offset="0" stop-color="#fac4c4"/><stop offset="0.5" stop-color="#f08a8a"/><stop offset="1" stop-color="#fac4c4"/></linearGradient></defs><path d="M4.4 0.6 H12 V8.4 H16.1 L8.2 16.3 L0.4 8.4 H4.4 Z" fill="url(#g9)" stroke="#b94848" stroke-width="1"/></svg>
<div class="num" style="top:814px;left:1312px;width:84px">-185,806</div>
<svg class="arr" style="top:816px;left:1313px" width="17" height="17" viewBox="0 0 17 17"><defs><linearGradient id="g10" x1="0" y1="0" x2="1" y2="0"><stop offset="0" stop-color="#fac4c4"/><stop offset="0.5" stop-color="#f08a8a"/><stop offset="1" stop-color="#fac4c4"/></linearGradient></defs><path d="M4.4 0.6 H12 V8.4 H16.1 L8.2 16.3 L0.4 8.4 H4.4 Z" fill="url(#g10)" stroke="#b94848" stroke-width="1"/></svg>
<div class="num" style="top:814px;left:1399px;width:85px">-232,284</div>
<svg class="arr" style="top:816px;left:1400px" width="17" height="17" viewBox="0 0 17 17"><defs><linearGradient id="g11" x1="0" y1="0" x2="1" y2="0"><stop offset="0" stop-color="#fac4c4"/><stop offset="0.5" stop-color="#f08a8a"/><stop offset="1" stop-color="#fac4c4"/></linearGradient></defs><path d="M4.4 0.6 H12 V8.4 H16.1 L8.2 16.3 L0.4 8.4 H4.4 Z" fill="url(#g11)" stroke="#b94848" stroke-width="1"/></svg>
<div class="num" style="top:814px;left:1487px;width:86px">-1,820,732</div>
<svg class="arr" style="top:816px;left:1488px" width="17" height="17" viewBox="0 0 17 17"><defs><linearGradient id="g12" x1="0" y1="0" x2="1" y2="0"><stop offset="0" stop-color="#fac4c4"/><stop offset="0.5" stop-color="#f08a8a"/><stop offset="1" stop-color="#fac4c4"/></linearGradient></defs><path d="M4.4 0.6 H12 V8.4 H16.1 L8.2 16.3 L0.4 8.4 H4.4 Z" fill="url(#g12)" stroke="#b94848" stroke-width="1"/></svg>
</body></html>
